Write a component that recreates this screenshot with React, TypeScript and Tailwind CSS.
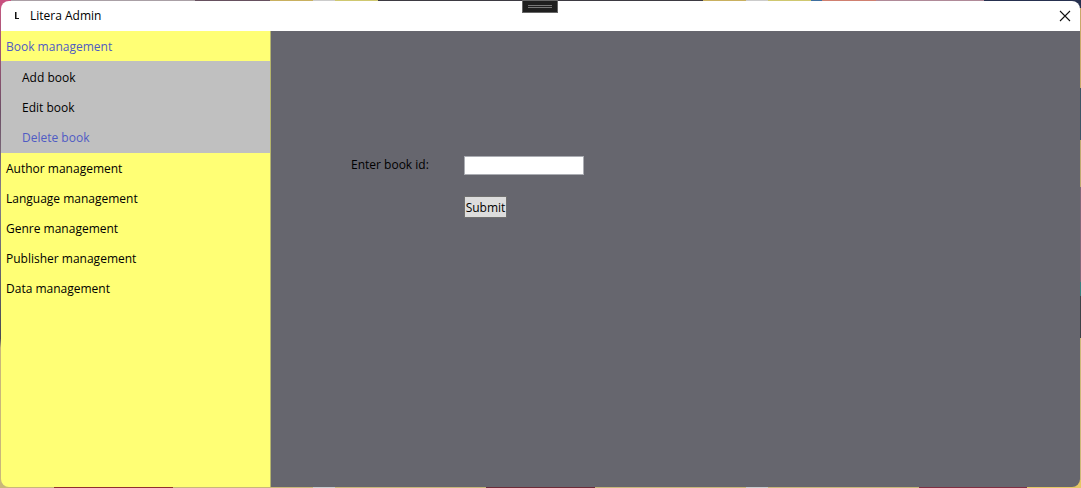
const bookLinks = [
  { label: "Add book", active: false },
  { label: "Edit book", active: false },
  { label: "Delete book", active: true },
];

const sections = [
  "Author management",
  "Language management",
  "Genre management",
  "Publisher management",
  "Data management",
];

function TitleBar() {
  return (
    <header className="flex h-[30px] shrink-0 items-center bg-white">
      <svg className="ml-3 h-2 w-2 shrink-0" viewBox="0 0 8 8" aria-hidden="true">
        <path d="M2 0H3.5V6H6V7H2Z" fill="#111" />
      </svg>
      <h1 className="ml-[9px]">Litera Admin</h1>
      <button type="button" aria-label="Close" className="ml-auto flex h-full w-[30px] items-center justify-center">
        <svg className="h-3 w-3" viewBox="0 0 12 12" aria-hidden="true">
          <path d="M1 1L11 11M11 1L1 11" fill="none" stroke="#111" strokeWidth="1.1" />
        </svg>
      </button>
    </header>
  );
}

function Sidebar() {
  return (
    <nav className="w-[270px] shrink-0 border-r border-[#b5b56d] bg-[#ffff75]">
      <a href="#book" className="flex h-[30px] items-center px-[5px] pt-0.5 text-[#4f5bc4]">
        Book management
      </a>
      <ul className="bg-[#c0c0c0] py-px">
        {bookLinks.map((link) => (
          <li key={link.label}>
            <a
              href="#book"
              className={
                link.active
                  ? "flex h-[30px] items-center px-[21px] pt-0.5 text-[#4f5bc4]"
                  : "flex h-[30px] items-center px-[21px] pt-0.5"
              }
            >
              {link.label}
            </a>
          </li>
        ))}
      </ul>
      <ul>
        {sections.map((label) => (
          <li key={label}>
            <a href="#section" className="flex h-[30px] items-center px-[5px] pt-0.5">
              {label}
            </a>
          </li>
        ))}
      </ul>
    </nav>
  );
}

function DeleteBookForm() {
  return (
    <main className="flex-1 bg-[#66666e] pt-[125px] pl-20">
      <form
        className="grid grid-cols-[113px_120px] items-center gap-y-[21px]"
        onSubmit={(event) => event.preventDefault()}
      >
        <label htmlFor="book-id" className="pb-0.5">Enter book id:</label>
        <input
          id="book-id"
          type="text"
          className="h-[19px] border border-[#abadb3] bg-white px-0.5 outline-none"
        />
        <button
          type="submit"
          className="col-start-2 flex h-[22px] w-[43px] items-center justify-center border border-[#707070] bg-[#dddddd] pt-0.5"
        >
          Submit
        </button>
      </form>
    </main>
  );
}

function Desktop() {
  return (
    <div className="absolute inset-0 flex flex-col" aria-hidden="true">
      <div className="h-2 bg-[linear-gradient(90deg,#c8507f_0_1%,#aaa0a6_1%_18%,#66505f_18%_25%,#c9b060_25%_29%,#cccccc_29%_31%,#cfc870_31%_35%,#3d3a42_35%_65%,#c9b060_65%_69%,#cccccc_69%_71%,#cfc870_71%_75%,#3f6f9f_75%_76%,#d08070_76%_81%,#b08a98_81%_91%,#26304f_91%)]" />
      <div className="flex flex-1 justify-between">
        <div className="w-2 bg-[linear-gradient(180deg,#c0587f_0%,#6d4f66_22%,#85808a_40%,#4a4a52_70%,#c9b77a_72%)]" />
        <div className="w-2 bg-[linear-gradient(180deg,#c9a96a_0_17%,#3f5565_17%_28%,#c0aa70_28%_38%,#806778_38%_58%,#3a8080_58%_61%,#3f4248_61%_70%,#cdb979_70%)]" />
      </div>
      <div className="h-2 bg-[linear-gradient(90deg,#c9b77a_0_5%,#8f3030_5%_16%,#c9b77a_16%_29%,#cccccc_29%_31%,#c9b77a_31%_45%,#6d2c38_45%_55%,#c9b77a_55%_69%,#cccccc_69%_71%,#c9b77a_71%_85%,#802f42_85%_95%,#e5c865_95%)]" />
    </div>
  );
}

export default function App() {
  return (
    <div className="relative flex min-h-screen flex-col p-px font-['Open_Sans','Noto_Sans',sans-serif] text-[12px] leading-4 text-black">
      <Desktop />
      <div className="relative flex flex-1 flex-col overflow-hidden rounded-lg">
        <TitleBar />
        <div className="flex flex-1">
          <Sidebar />
          <DeleteBookForm />
        </div>
      </div>
      <div className="absolute inset-x-0 top-0 flex justify-center pr-px">
        <div className="flex h-[13px] w-9 flex-col items-center justify-center gap-px border border-[#666666] bg-[#1f1f1f]">
          <span className="h-px w-6 bg-[#777777]" />
          <span className="h-px w-6 bg-[#777777]" />
        </div>
      </div>
    </div>
  );
}
